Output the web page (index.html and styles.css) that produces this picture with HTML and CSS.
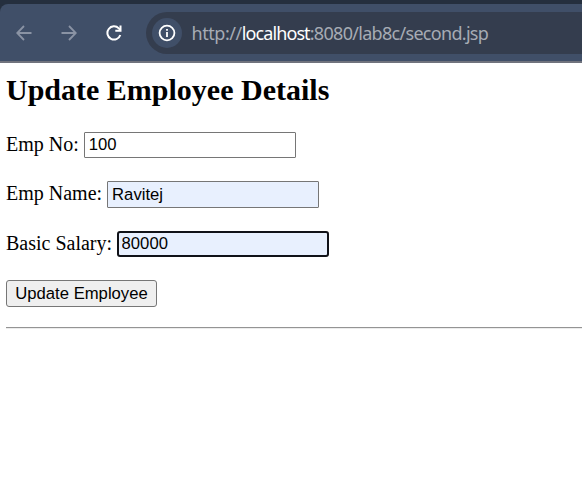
FILE: index.html
```html
<!DOCTYPE html>
<html lang="en">
<head>
<meta charset="utf-8">
<title>Update Employee</title>
<link rel="stylesheet" href="styles.css">
</head>
<body>
<header class="browser">
  <div class="toolbar">
    <svg class="nav-icon dim" viewBox="0 0 16 16"><path d="M15.5 8H1.5M8 1L1.2 8L8 15"/></svg>
    <svg class="nav-icon dim" viewBox="0 0 16 16"><path d="M.5 8h14M8 1l6.8 7L8 15"/></svg>
    <svg class="nav-icon reload" viewBox="0 0 16 16"><path d="M14.3 10A6.6 6.6 0 1 1 12.8 3.4L14.4 5"/><path d="M14.5 .5V5.7H9.3"/></svg>
    <div class="address">
      <span class="info"><svg class="info-icon" viewBox="0 0 18 18"><circle cx="9" cy="9" r="7.4"/><path d="M9 8v5M9 5v1.8"/></svg></span>
      <span class="url"><span class="scheme">http://</span><span class="host">localhost</span>:8080/lab8c/second.jsp</span>
    </div>
  </div>
</header>
<main class="page">
  <h2 class="title">Update Employee Details</h2>
  <form class="form">
    <div class="row"><label for="no">Emp No:</label><input class="field" id="no" type="text" value="100"></div>
    <div class="row"><label for="name">Emp Name:</label><input class="field filled tall" id="name" type="text" value="Ravitej"></div>
    <div class="row"><label for="salary">Basic Salary:</label><input class="field filled active" id="salary" type="text" value="80000"></div>
    <button class="submit" type="button">Update Employee</button>
  </form>
  <hr class="rule">
</main>
</body>
</html>
```
FILE: styles.css
```css
* { box-sizing: border-box; }
body {
  margin: 0;
  height: 500px;
  overflow: hidden;
  background: #fff;
  color: #000;
  font: 20px/23px "Liberation Serif", "Times New Roman", serif;
}
.browser {
  height: 63px;
  padding-top: 4px;
  background: #252f3e;
}
.toolbar {
  display: flex;
  align-items: flex-start;
  height: 59px;
  padding: 8px 0 0 16px;
  background: #404f68;
  border-bottom: 2px solid #70737d;
  border-top-left-radius: 8px;
}
.nav-icon {
  flex: none;
  width: 16px;
  height: 16px;
  margin: 12.5px 29px 0 0;
  fill: none;
  stroke: #fff;
  stroke-width: 2;
}
.dim { stroke: #8a93a4; stroke-width: 1.8; }
.reload { margin-right: 24px; margin-left: -.5px; }
.address {
  display: flex;
  flex: 1;
  align-items: center;
  height: 42px;
  padding-left: 6px;
  background: #343d4e;
  border-radius: 21px 0 0 21px;
}
.info {
  display: flex;
  align-items: center;
  justify-content: center;
  width: 30px;
  height: 30px;
  margin-right: 10px;
  background: #404f68;
  border-radius: 50%;
}
.info-icon {
  width: 18px;
  height: 18px;
  fill: none;
  stroke: #fff;
  stroke-width: 1.8;
}
.url {
  color: #a6abb4;
  font: 18px/24px "Noto Sans", sans-serif;
  letter-spacing: -0.7px;
  white-space: nowrap;
}
.scheme { letter-spacing: -0.45px; }
.host { color: #fff; letter-spacing: -0.9px; }
.page { padding: 9px 0 0 6px; }
.title {
  margin: 0 0 25px;
  font-size: 30px;
  line-height: 35px;
}
.form {
  display: flex;
  flex-direction: column;
  align-items: flex-start;
  gap: 23px;
}
.row {
  display: flex;
  align-items: flex-start;
  gap: 5px;
}
.row label { padding-top: 1px; }
.field {
  width: 212px;
  height: 26px;
  padding: 0 4px;
  border: 1px solid #767676;
  border-radius: 1px;
  outline: 0;
  background: #fff;
  color: #000;
  font: 16.67px/20px "Liberation Sans", Arial, sans-serif;
}
.filled { background: #e8f0fe; }
.tall { height: 27px; }
.active {
  padding: 0 3px 0 2.5px;
  border: 2px solid #101218;
  border-radius: 3px;
}
.submit {
  width: 151px;
  height: 27px;
  padding: 0;
  border: 1px solid #767676;
  border-radius: 3px;
  background: #efefef;
  color: #000;
  font: 16.67px/20px "Liberation Sans", Arial, sans-serif;
}
.rule {
  height: 2px;
  margin: 20px 0 0;
  border: 0;
  border-top: 1px solid #949494;
  border-bottom: 1px solid #ececec;
}
```
